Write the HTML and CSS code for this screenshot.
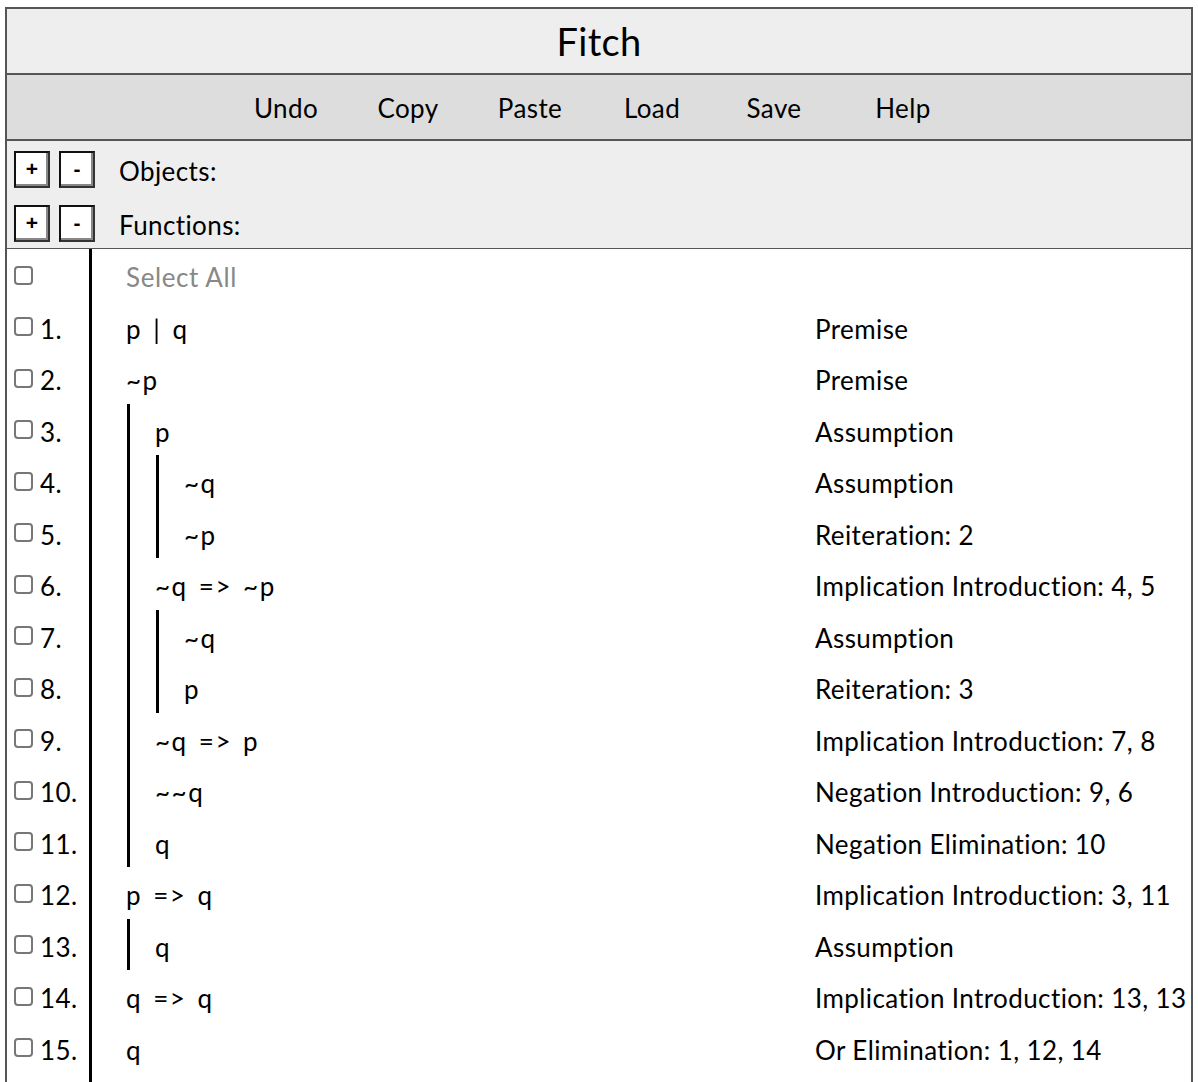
FILE: index.html
```html
<!DOCTYPE html>
<html>
<head>
<meta charset="utf-8">
<title>Fitch</title>
<link rel="stylesheet" href="styles.css">
</head>
<body>
<div class="app">
  <div class="title">Fitch</div>
  <div class="toolbar">
    <span class="tb">Undo</span>
    <span class="tb">Copy</span>
    <span class="tb">Paste</span>
    <span class="tb">Load</span>
    <span class="tb">Save</span>
    <span class="tb help">Help</span>
  </div>
  <div class="symbols">
    <div class="symrow">
      <span class="sbtn">+</span><span class="sbtn">-</span>
      <span class="symlabel">Objects:</span>
    </div>
    <div class="symrow">
      <span class="sbtn">+</span><span class="sbtn">-</span>
      <span class="symlabel">Functions:</span>
    </div>
  </div>
  <div class="proof">
    <div class="gutter">
      <div class="grow"><span class="cb"></span></div>
      <div class="grow"><span class="cb"></span><span class="num">1.</span></div>
      <div class="grow"><span class="cb"></span><span class="num">2.</span></div>
      <div class="grow"><span class="cb"></span><span class="num">3.</span></div>
      <div class="grow"><span class="cb"></span><span class="num">4.</span></div>
      <div class="grow"><span class="cb"></span><span class="num">5.</span></div>
      <div class="grow"><span class="cb"></span><span class="num">6.</span></div>
      <div class="grow"><span class="cb"></span><span class="num">7.</span></div>
      <div class="grow"><span class="cb"></span><span class="num">8.</span></div>
      <div class="grow"><span class="cb"></span><span class="num">9.</span></div>
      <div class="grow"><span class="cb"></span><span class="num">10.</span></div>
      <div class="grow"><span class="cb"></span><span class="num">11.</span></div>
      <div class="grow"><span class="cb"></span><span class="num">12.</span></div>
      <div class="grow"><span class="cb"></span><span class="num">13.</span></div>
      <div class="grow"><span class="cb"></span><span class="num">14.</span></div>
      <div class="grow"><span class="cb"></span><span class="num">15.</span></div>
    </div>
    <div class="lines">
      <div class="row"><span class="formula selectall">Select All</span></div>
      <div class="row"><span class="formula">p | q</span><span class="just">Premise</span></div>
      <div class="row"><span class="formula">~p</span><span class="just">Premise</span></div>
      <div class="sub">
        <div class="row"><span class="formula">p</span><span class="just">Assumption</span></div>
        <div class="sub">
          <div class="row"><span class="formula">~q</span><span class="just">Assumption</span></div>
          <div class="row"><span class="formula">~p</span><span class="just">Reiteration: 2</span></div>
        </div>
        <div class="row"><span class="formula">~q =&gt; ~p</span><span class="just">Implication Introduction: 4, 5</span></div>
        <div class="sub">
          <div class="row"><span class="formula">~q</span><span class="just">Assumption</span></div>
          <div class="row"><span class="formula">p</span><span class="just">Reiteration: 3</span></div>
        </div>
        <div class="row"><span class="formula">~q =&gt; p</span><span class="just">Implication Introduction: 7, 8</span></div>
        <div class="row"><span class="formula">~~q</span><span class="just">Negation Introduction: 9, 6</span></div>
        <div class="row"><span class="formula">q</span><span class="just">Negation Elimination: 10</span></div>
      </div>
      <div class="row"><span class="formula">p =&gt; q</span><span class="just">Implication Introduction: 3, 11</span></div>
      <div class="sub">
        <div class="row"><span class="formula">q</span><span class="just">Assumption</span></div>
      </div>
      <div class="row"><span class="formula">q =&gt; q</span><span class="just">Implication Introduction: 13, 13</span></div>
      <div class="row"><span class="formula">q</span><span class="just">Or Elimination: 1, 12, 14</span></div>
    </div>
  </div>
</div>
</body>
</html>
```
FILE: styles.css
```css
* { box-sizing: border-box; }
html, body { margin: 0; padding: 0; background: #fff; }
body {
  font-family: Lato, "Noto Sans", sans-serif;
  font-size: 26px;
  letter-spacing: 0.4px;
  color: #000;
}
.app {
  margin: 7px 0 0 5px;
  width: 1188px;
  border: 2px solid #555;
  border-bottom: none;
}
.title {
  height: 66px;
  background: #eee;
  border-bottom: 2px solid #555;
  font-size: 38px;
  letter-spacing: 0.3px;
  display: flex;
  align-items: center;
  justify-content: center;
  padding-bottom: 1px;
}
.toolbar {
  height: 66px;
  background: #ddd;
  border-bottom: 2px solid #555;
  display: flex;
  align-items: center;
  padding-left: 218px;
  padding-top: 2px;
}
.tb {
  width: 122px;
  text-align: center;
}
.tb.help { margin-left: 7px; }
.symbols {
  background: #eee;
  border-bottom: 1px solid #555;
  padding: 10px 0 6px 7px;
  display: flex;
  flex-direction: column;
  gap: 17px;
}
.symrow {
  display: flex;
  align-items: center;
  height: 37px;
}
.sbtn {
  width: 36px;
  height: 37px;
  background: #fff;
  border: 2px solid #111;
  border-right-color: #333;
  border-bottom-color: #333;
  box-shadow: inset -2px -2px 0 #888;
  font-family: "Liberation Sans", Arial, sans-serif;
  font-weight: bold;
  font-size: 21px;
  letter-spacing: 0;
  display: flex;
  align-items: center;
  justify-content: center;
  padding-bottom: 2px;
  margin-right: 9px;
}
.symlabel { margin-left: 15px; padding-top: 2px; }
.proof {
  display: flex;
}
.gutter {
  width: 85px;
  border-right: 3px solid #000;
  flex-shrink: 0;
}
.grow {
  height: 51.5px;
  display: flex;
  align-items: center;
  padding-left: 7px;
  padding-top: 5px;
}
.cb {
  width: 19px;
  height: 19px;
  border: 2px solid #777;
  border-radius: 4px;
  background: #fff;
  margin-right: 7px;
  margin-top: -4px;
}
.lines {
  flex: 1;
  padding-left: 34px;
  padding-bottom: 40px;
}
.row {
  height: 51.5px;
  display: flex;
  align-items: center;
  padding-top: 5px;
}
.formula {
  flex: 1;
  white-space: nowrap;
  letter-spacing: 1.5px;
  word-spacing: 3px;
}
.selectall { color: #888; letter-spacing: 0.6px; word-spacing: 0; }
.just {
  width: 376px;
  flex-shrink: 0;
  white-space: nowrap;
}
.sub {
  margin-left: 1px;
  border-left: 3px solid #000;
  padding-left: 25px;
}
```
